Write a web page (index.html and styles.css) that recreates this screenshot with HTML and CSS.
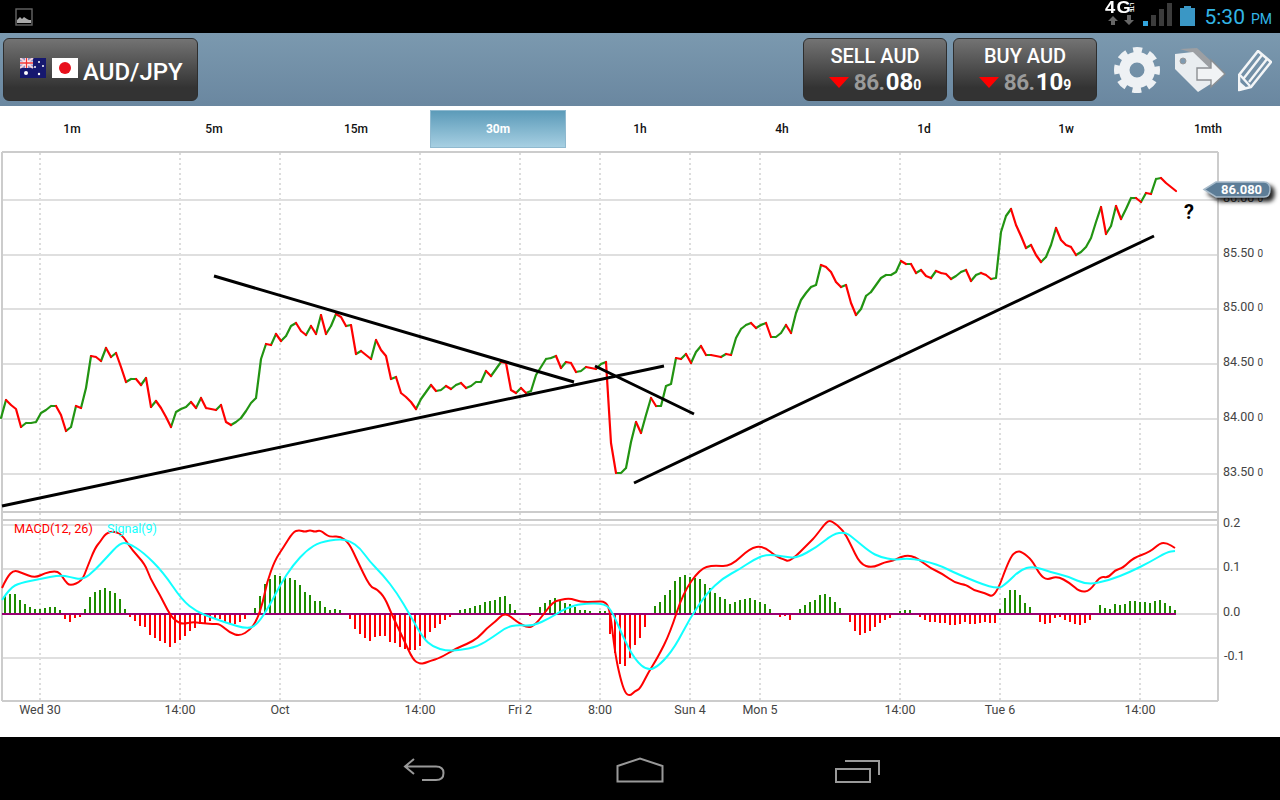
FILE: index.html
```html
<!DOCTYPE html>
<html lang="en">
<head>
<meta charset="utf-8">
<title>AUD/JPY</title>
<link rel="stylesheet" href="styles.css">
</head>
<body>
<div class="status">
  <svg class="pic" width="18" height="18" viewBox="0 0 18 18"><rect x="1" y="1" width="16" height="16" fill="none" stroke="#666" stroke-width="1.4"/><path d="M2 15v-3l3-3 2 2 2-2 3 2 2 1 2 0v3z" fill="#aaa"/></svg>
  <div class="net">
    <div class="net-top"><span class="fourg">4G</span><span class="lte">LTE</span></div>
    <svg width="30" height="10" viewBox="0 0 30 10"><path d="M1 6l5-5 5 5h-3v4h-4v-4zM17 5h3v-5h4v5h3l-5 5z" fill="#666"/></svg>
  </div>
  <svg class="sig" width="29" height="23" viewBox="0 0 29 23"><rect x="0" y="18" width="5" height="5" fill="#33a5dd"/><rect x="8" y="12" width="5" height="11" fill="#3c3c3c"/><rect x="16" y="6" width="5" height="17" fill="#3c3c3c"/><rect x="24" y="0" width="5" height="23" fill="#3c3c3c"/></svg>
  <svg class="bat" width="15" height="20" viewBox="0 0 15 20"><path d="M4 0h7v2h4v18h-15v-18h4z" fill="#3a97c5"/></svg>
  <div class="clock"><span class="time">5:30</span><span class="ampm">PM</span></div>
</div>

<header class="head">
  <button class="btn pair">
    <svg class="flag" width="26" height="20" viewBox="0 0 26 20"><rect width="26" height="20" fill="#16186f"/><rect width="13" height="10" fill="#8d8fc4"/><path d="M0 0l13 10M13 0l-13 10" stroke="#f4d4dc" stroke-width="2"/><path d="M6.5 0v10M0 5h13" stroke="#fff" stroke-width="3"/><path d="M6.5 0v10M0 5h13" stroke="#e33" stroke-width="1.4"/><circle cx="6" cy="15" r="2" fill="#fff"/><circle cx="19" cy="4" r="1" fill="#fff"/><circle cx="23" cy="8" r="1" fill="#fff"/><circle cx="15" cy="9" r="1" fill="#fff"/><circle cx="19" cy="16" r="1.2" fill="#fff"/></svg>
    <svg class="flag jp" width="26" height="20" viewBox="0 0 26 20"><rect width="26" height="20" fill="#fff"/><circle cx="13" cy="10" r="6" fill="#e8101c"/></svg>
    <span class="pair-name">AUD/JPY</span>
  </button>
  <button class="btn quote sell">
    <span class="q-title">SELL AUD</span>
    <span class="q-price"><i class="down"></i><span class="p-dim">86.</span><span class="p-big">08</span><span class="p-small">0</span></span>
  </button>
  <button class="btn quote buy">
    <span class="q-title">BUY AUD</span>
    <span class="q-price"><i class="down"></i><span class="p-dim">86.</span><span class="p-big">10</span><span class="p-small">9</span></span>
  </button>
  <svg class="gear" width="46" height="46" viewBox="0 0 46 46">
    <circle cx="23" cy="23" r="12.75" fill="none" stroke="#eef1f4" stroke-width="10.5"/>
    <circle cx="23" cy="23" r="19" fill="none" stroke="#eef1f4" stroke-width="8" stroke-dasharray="8.5 6.42" stroke-dashoffset="4.25"/>
  </svg>
  <svg class="tag" width="52" height="48" viewBox="0 0 52 48">
    <path d="M6 3l17-1 27 25-7 6-24-26z" fill="#9c9fa3"/>
    <path d="M1 8l18-2 27 26-22 14-23-23z" fill="#e9edf0"/>
    <circle cx="9" cy="15" r="3" fill="#7f9ab0" stroke="#999"/>
    <path d="M23 22h14v-8l14 14-14 13v-7h-14z" fill="#f1f3f5" stroke="#8c8f92" stroke-width="1.4"/>
  </svg>
  <svg class="pen" width="34" height="42" viewBox="0 0 34 42">
    <path d="M20 1l13 11-20 25-12 3 0-15z" fill="none" stroke="#f3f5f7" stroke-width="2.6" stroke-linejoin="round"/>
    <path d="M24 5l-18 23M29 9l-18 23M2 25l10 11" fill="none" stroke="#f3f5f7" stroke-width="2.4"/>
    <path d="M1 41l1-9 7 6z" fill="#f3f5f7"/>
  </svg>
</header>

<nav class="tabs">
  <a class="tab">1m</a><a class="tab">5m</a><a class="tab">15m</a><a class="tab on">30m</a><a class="tab">1h</a><a class="tab">4h</a><a class="tab">1d</a><a class="tab">1w</a><a class="tab">1mth</a>
</nav>

<main class="chart">
  <svg class="plot" width="1280" height="587" viewBox="0 150 1280 587">
    <g class="vgrid">
      <path d="M40 153V700M180 153V700M280 153V700M420 153V700M520 153V700M600 153V700M690 153V700M760 153V700M900 153V700M1000 153V700M1140 153V700"/>
    </g>
    <g class="hgrid">
      <path d="M2 200H1217M2 255H1217M2 309H1217M2 364H1217M2 419H1217M2 474H1217M2 525H1217M2 569H1217M2 614H1217M2 658H1217"/>
    </g>
    <g class="frame">
      <path d="M2 152H1218M2 152V701M1218 152V701M2 701H1218M2 512H1218M2 520H1218"/>
    </g>
    <g id="hist"></g>
    <rect class="zero" x="2" y="613" width="1174" height="2"/>
    <path id="macd" class="line-macd"/>
    <path id="signal" class="line-signal"/>
    <g id="price" class="line-price"></g>
    <path class="trend" d="M214 276L574 382M2 506L664 366M595 366L694 414M634 483L1154 236"/>

    <text class="qm" x="1184" y="219">?</text>
    <text class="legend-m" x="14" y="533">MACD(12, 26)</text>
    <text class="legend-s" x="107" y="533">Signal(9)</text>

    <g class="axis">
      <text x="1223" y="202">86.00<tspan class="tiny" dx="3">0</tspan></text>
      <text x="1223" y="257">85.50<tspan class="tiny" dx="3">0</tspan></text>
      <text x="1223" y="311">85.00<tspan class="tiny" dx="3">0</tspan></text>
      <text x="1223" y="366">84.50<tspan class="tiny" dx="3">0</tspan></text>
      <text x="1223" y="421">84.00<tspan class="tiny" dx="3">0</tspan></text>
      <text x="1223" y="476">83.50<tspan class="tiny" dx="3">0</tspan></text>
      <text x="1223" y="527">0.2</text>
      <text x="1223" y="571">0.1</text>
      <text x="1223" y="616">0.0</text>
      <text x="1224" y="660">-0.1</text>
    </g>
    <g class="axis xaxis">
      <text x="40" y="714">Wed 30</text>
      <text x="180" y="714">14:00</text>
      <text x="280" y="714">Oct</text>
      <text x="420" y="714">14:00</text>
      <text x="520" y="714">Fri 2</text>
      <text x="600" y="714">8:00</text>
      <text x="690" y="714">Sun 4</text>
      <text x="760" y="714">Mon 5</text>
      <text x="900" y="714">14:00</text>
      <text x="1000" y="714">Tue 6</text>
      <text x="1140" y="714">14:00</text>
    </g>
    <g class="badge">
      <path class="badge-shape" d="M1204 189.5L1216 182H1264Q1270 182 1270 189.5Q1270 197 1264 197H1216Z"/>
      <text class="badge-text" x="1221" y="194">86.080</text>
    </g>
  </svg>
</main>

<footer class="nav">
  <svg class="nb back" width="44" height="26" viewBox="0 0 44 26"><path d="M12 2L3 9.500L12 17M3 9.500H34Q41.500 9.500 41.500 16Q41.500 23 34 23H20" /></svg>
  <svg class="nb home" width="48" height="26" viewBox="0 0 48 26"><path d="M1.500 24.500V9L24 1.500L46.500 9V24.500Z"/></svg>
  <svg class="nb rec" width="46" height="24" viewBox="0 0 46 24"><path d="M2 10H36V23H2ZM11 2H45V16"/></svg>
</footer>
<script src="chart.js"></script>
</body>
</html>
```

FILE: styles.css
```css
* { box-sizing: border-box; }
html, body { margin: 0; padding: 0; }
body {
  width: 1280px;
  height: 800px;
  overflow: hidden;
  background: #fff;
  font-family: Roboto, "Liberation Sans", sans-serif;
  display: flex;
  flex-direction: column;
}

/* status bar */
.status {
  height: 33px;
  flex: none;
  background: #000;
  display: flex;
  align-items: flex-start;
  padding: 0 8px 0 15px;
}
.pic { margin-top: 8px; }
.net { margin-left: auto; width: 33px; display: flex; flex-direction: column; align-items: center; }
.net-top { display: flex; align-items: flex-start; height: 15px; color: #fff; width: 33px; }
.fourg { font: 700 16px/16px "Liberation Sans", sans-serif; letter-spacing: 1px; width: 23px; transform: scaleX(1.15); transform-origin: left; }
.lte { font: 700 5px/5px "Liberation Sans", sans-serif; writing-mode: vertical-rl; margin-left: 1px; margin-top: 3px; }
.sig { margin: 3px 0 0 5px; flex: none; }
.bat { margin: 6px 0 0 8px; flex: none; }
.clock { color: #33b5e5; margin-left: 9px; display: flex; align-items: baseline; height: 33px; padding-top: 4px; }
.time { font-size: 21px; line-height: 26px; }
.ampm { font-size: 14px; margin-left: 6px; }

/* header */
.head {
  height: 73px;
  flex: none;
  display: flex;
  align-items: flex-start;
  padding: 5px 8px 0 3px;
  background: linear-gradient(#7b99af, #6a87a0);
}
.btn {
  height: 63px;
  border: 1px solid #2e2e2e;
  border-radius: 6px;
  background: linear-gradient(#737373, #333 80%);
  color: #fff;
  font-family: inherit;
  padding: 0;
}
.pair {
  width: 195px;
  display: flex;
  align-items: flex-start;
  padding: 19px 0 0 16px;
}
.flag { flex: none; }
.jp { margin-left: 6px; }
.pair-name { font-size: 24px; font-weight: 500; line-height: 28px; margin-left: 5px; }
.quote { width: 144px; display: flex; flex-direction: column; align-items: center; }
.sell { margin-left: auto; }
.buy { margin-left: 6px; }
.q-title { font-size: 20px; font-weight: 500; line-height: 24px; margin-top: 5px; }
.q-price { display: flex; align-items: baseline; height: 28px; line-height: 28px; margin-top: 0; }
.down {
  width: 0; height: 0;
  border-left: 10px solid transparent;
  border-right: 10px solid transparent;
  border-top: 11px solid #f00;
  margin-right: 5px;
  align-self: center;
}
.p-dim { font-size: 22.5px; font-weight: 700; color: #9a9a9a; letter-spacing: -0.5px; }
.p-big { font-size: 24px; font-weight: 700; margin-left: 1px; }
.p-small { font-size: 14px; font-weight: 700; }
.gear { margin: 9px 0 0 17px; flex: none; }
.tag { margin: 8px 0 0 14px; flex: none; }
.pen { margin: 12px 0 0 12px; flex: none; }

/* tabs */
.tabs {
  height: 44px;
  flex: none;
  display: grid;
  grid-template-columns: repeat(9, 142px);
  padding-left: 2px;
  background: #fff;
}
.tab {
  margin: 4px 4px 2px 2px;
  display: flex;
  align-items: center;
  justify-content: center;
  font-size: 12px;
  font-weight: 500;
  color: #111;
}
.on {
  background: linear-gradient(#5c9bb9, #a6cfe2);
  color: #fff;
  font-weight: 700;
  border: 1px solid #8fb9cf;
}

/* chart */
.chart { height: 587px; flex: none; position: relative; }
.plot { display: block; font-family: Roboto, "Liberation Sans", sans-serif; }
.vgrid path { fill: none; stroke: #dcdcdc; stroke-width: 2; stroke-dasharray: 2 3; }
.hgrid path { fill: none; stroke: #dfdfdf; stroke-width: 2; }
.frame path { fill: none; stroke: #ccc; stroke-width: 2; }
.zero { fill: #990073; }
.bar-up { fill: #1e8c00; }
.bar-down { fill: #f00; }
.line-macd { fill: none; stroke: #f00; stroke-width: 2; stroke-linejoin: round; }
.line-signal { fill: none; stroke: #1ff; stroke-width: 2; stroke-linejoin: round; }
.seg-up { fill: none; stroke: #229412; stroke-width: 2.2; stroke-linecap: round; }
.seg-down { fill: none; stroke: #f00; stroke-width: 2.2; stroke-linecap: round; }
.trend { fill: none; stroke: #000; stroke-width: 3; }
.qm { font-size: 20px; font-weight: 700; fill: #000; }
.legend-m { font-size: 12.7px; fill: #f00; }
.legend-s { font-size: 12.5px; fill: #1ff; }
.axis text { font-size: 12.5px; fill: #444; }
.xaxis text { text-anchor: middle; }
.axis .tiny { font-size: 10px; }
.badge-shape { fill: #5d7d97; stroke: #a9bccb; stroke-width: 1.5; filter: drop-shadow(4px 4px 2px rgba(0,0,0,.85)); }
.badge-text { font-size: 13px; font-weight: 700; fill: #fff; }

/* nav bar */
.nav {
  flex: 1;
  background: #000;
  display: flex;
  align-items: flex-start;
  padding: 20px 0 0 402px;
}
.nb { flex: none; }
.nb path { fill: none; stroke: #999; stroke-width: 2; }
.home { margin-left: 170px; }
.rec { margin-left: 170px; margin-top: 2px; }
```

FILE: chart.js
```js
(function () {
  var NS = "http://www.w3.org/2000/svg";
  function el(parent, tag, attrs) {
    var e = document.createElementNS(NS, tag);
    for (var k in attrs) e.setAttribute(k, attrs[k]);
    parent.appendChild(e);
    return e;
  }

  var price = [
    418,400,405,409,427,423,423,422,413,410,406,406,415,431,427,406,408,388,356,357,
    361,348,357,353,367,382,379,379,385,378,407,401,408,417,427,412,409,407,402,408,
    398,408,409,410,405,422,425,422,418,411,403,398,359,344,345,334,341,336,326,323,
    331,335,326,334,315,334,326,314,317,326,325,354,351,355,359,340,350,356,379,377,
    393,397,402,409,399,392,385,391,390,386,389,385,383,388,386,382,382,371,376,369,
    362,363,390,393,388,393,391,375,367,359,358,356,368,362,363,372,371,367,368,369,
    364,362,443,473,473,468,442,422,433,415,398,406,406,386,384,358,359,354,363,352,
    346,355,355,356,357,354,355,338,329,325,323,328,325,323,337,337,333,325,333,313,
    300,293,287,285,265,267,272,282,287,285,303,315,309,296,292,285,278,275,275,272,
    261,264,264,273,270,276,278,271,273,274,279,276,272,270,281,275,273,275,279,278,
    232,216,209,225,236,248,245,255,262,257,245,228,240,245,247,255,252,247,238,222,
    207,234,226,206,219,209,198,198,202,193,194,179,178,183,187,191
  ];
  var pg = document.getElementById("price");
  var up = "", down = "";
  for (var i = 1; i < price.length; i++) {
    var s = "M" + (1 + 5 * (i - 1)) + " " + price[i - 1] + "L" + (1 + 5 * i) + " " + price[i];
    if (price[i] <= price[i - 1]) up += s; else down += s;
  }
  el(pg, "path", { d: up, "class": "seg-up" });
  el(pg, "path", { d: down, "class": "seg-down" });

  var hist = [
    17,19,19,13,9,6,4,4,5,6,6,3,-4,-7,-3,-2,4,16,21,23,25,22,20,14,4,-2,-6,-11,-12,-20,
    -23,-26,-28,-32,-28,-25,-21,-16,-13,-9,-8,-6,-4,-4,-7,-8,-9,-7,-4,0,5,17,29,34,38,37,35,35,33,28,
    21,18,12,12,6,3,4,3,0,-4,-14,-19,-23,-26,-22,-21,-21,-27,-28,-32,-34,-35,-35,-31,-25,-17,-13,-9,-5,-2,
    0,3,4,5,7,8,11,12,13,16,17,9,3,0,0,-1,0,6,10,13,15,12,10,9,6,3,3,2,0,2,
    2,-19,-38,-49,-51,-43,-30,-23,-12,0,7,11,18,23,32,36,38,36,35,34,29,25,20,16,14,9,11,13,14,15,
    13,11,9,4,0,-2,-1,-5,0,4,8,11,13,18,19,16,11,5,0,-7,-16,-20,-18,-16,-12,-8,-5,-3,0,2,
    3,3,0,-2,-5,-7,-7,-8,-8,-10,-10,-9,-7,-9,-9,-8,-7,-8,-8,4,15,23,23,18,10,6,0,-7,-9,-8,
    -3,-2,-5,-7,-9,-10,-8,-5,0,8,5,4,9,8,9,12,12,11,11,10,12,13,10,7,3
  ];
  var hg = document.getElementById("hist");
  hist.forEach(function (h, k) {
    if (!h) return;
    var x = 4 + 5 * k;
    if (h > 0) el(hg, "rect", { x: x, y: 613 - h, width: 2, height: h, "class": "bar-up" });
    else el(hg, "rect", { x: x, y: 615, width: 2, height: -h, "class": "bar-down" });
  });

  function smooth(p) {
    var d = "M" + p[0] + " " + p[1];
    for (var i = 2; i < p.length - 2; i += 2) {
      var mx = (p[i] + p[i + 2]) / 2, my = (p[i + 1] + p[i + 3]) / 2;
      d += "Q" + p[i] + " " + p[i + 1] + " " + mx + " " + my;
    }
    return d + "L" + p[p.length - 2] + " " + p[p.length - 1];
  }

  var macd = [
    2,588,7,577,14,570,22,573,35,578,45,573,55,571,60,573,65,581,70,586,82,581,87,568,95,548,100,542,106,533,115,531,123,536,132,550,145,564,150,578,160,595,170,615,177,622,183,624,193,622,200,623,213,624,220,624,230,633,240,636,250,630,257,620,263,602,
    267,582,275,560,283,548,293,532,299,530,305,532,310,530,315,532,320,530,325,534,330,537,340,536,349,543,357,560,370,587,377,589,385,598,392,615,403,638,413,660,420,664,425,663,430,661,440,658,457,648,467,644,478,638,487,628,495,622,505,612,517,622,528,628,535,625,543,615,553,602,560,600,570,598,580,602,
    595,602,605,601,610,610,615,653,620,677,625,693,630,696,635,691,640,689,648,673,658,657,670,633,683,593,700,569,713,565,730,567,750,548,763,546,777,557,783,559,790,562,810,542,815,537,827,521,832,521,843,530,850,543,860,564,
    872,568,885,562,893,561,900,557,910,555,920,560,930,568,943,574,955,583,967,585,973,590,985,593,995,598,1010,557,1017,551,1022,552,1032,560,1040,575,1047,580,1057,576,1070,583,1080,592,1090,591,1100,576,1108,578,1115,570,1123,568,1133,558,1150,552,1160,543,1167,543,1175,548
  ];
  var signal = [
    2,600,10,588,20,583,40,579,60,575,70,577,83,580,95,570,107,557,120,543,128,543,143,552,163,572,182,600,197,612,213,618,227,623,247,629,257,625,
    270,605,280,585,293,565,307,550,320,542,340,539,350,541,360,548,370,562,383,575,397,593,410,615,423,638,433,647,447,651,460,650,477,647,493,637,507,627,517,625,533,626,550,618,563,610,
    570,607,580,604,605,603,613,613,623,637,635,660,648,671,660,665,675,647,690,618,707,593,723,578,740,569,753,560,767,554,787,557,797,558,817,547,833,534,845,532,
    852,537,870,552,880,557,895,560,910,558,937,564,957,574,997,590,1007,583,1020,570,1033,566,1050,572,1067,576,1087,585,1110,580,1130,572,1150,562,1167,552,1175,551
  ];
  document.getElementById("macd").setAttribute("d", smooth(macd));
  document.getElementById("signal").setAttribute("d", smooth(signal));
})();
```
